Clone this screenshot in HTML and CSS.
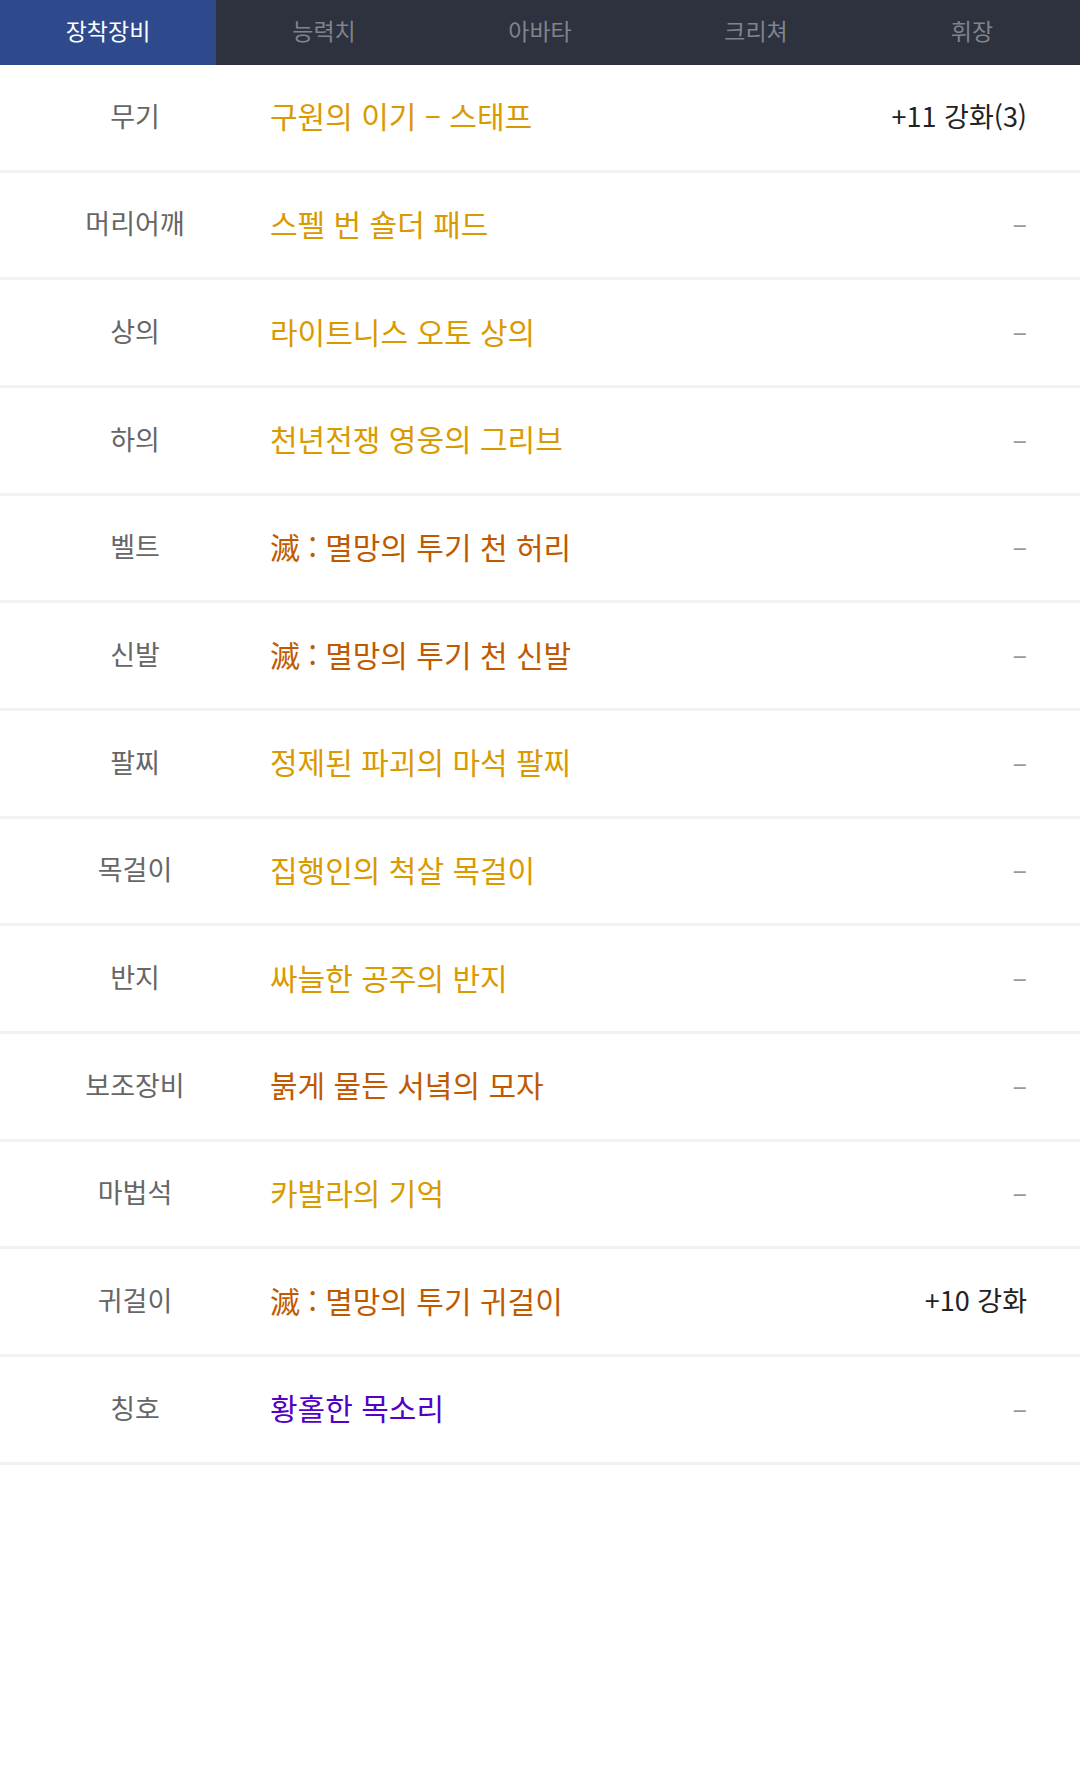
FILE: index.html
```html
<!DOCTYPE html>
<html lang="ko">
<head>
  <meta charset="UTF-8" />
  <meta name="viewport" content="width=device-width, initial-scale=1.0" />
  <title>장착장비</title>
  <link rel="stylesheet" href="styles.css">
</head>
<body>

  <nav class="tabs">
    <div class="tab active">장착장비</div>
    <div class="tab">능력치</div>
    <div class="tab">아바타</div>
    <div class="tab">크리쳐</div>
    <div class="tab">휘장</div>
  </nav>

  <div class="equip-list">
    <div class="row">
      <div class="slot">무기</div>
      <div class="name rare">구원의 이기 – 스태프</div>
      <div class="value">+11 강화(3)</div>
    </div>
    <div class="row">
      <div class="slot">머리어깨</div>
      <div class="name rare">스펠 번 숄더 패드</div>
      <div class="value empty">–</div>
    </div>
    <div class="row">
      <div class="slot">상의</div>
      <div class="name rare">라이트니스 오토 상의</div>
      <div class="value empty">–</div>
    </div>
    <div class="row">
      <div class="slot">하의</div>
      <div class="name rare">천년전쟁 영웅의 그리브</div>
      <div class="value empty">–</div>
    </div>
    <div class="row">
      <div class="slot">벨트</div>
      <div class="name epic">滅 : 멸망의 투기 천 허리</div>
      <div class="value empty">–</div>
    </div>
    <div class="row">
      <div class="slot">신발</div>
      <div class="name epic">滅 : 멸망의 투기 천 신발</div>
      <div class="value empty">–</div>
    </div>
    <div class="row">
      <div class="slot">팔찌</div>
      <div class="name rare">정제된 파괴의 마석 팔찌</div>
      <div class="value empty">–</div>
    </div>
    <div class="row">
      <div class="slot">목걸이</div>
      <div class="name rare">집행인의 척살 목걸이</div>
      <div class="value empty">–</div>
    </div>
    <div class="row">
      <div class="slot">반지</div>
      <div class="name rare">싸늘한 공주의 반지</div>
      <div class="value empty">–</div>
    </div>
    <div class="row">
      <div class="slot">보조장비</div>
      <div class="name epic">붉게 물든 서녘의 모자</div>
      <div class="value empty">–</div>
    </div>
    <div class="row">
      <div class="slot">마법석</div>
      <div class="name rare">카발라의 기억</div>
      <div class="value empty">–</div>
    </div>
    <div class="row">
      <div class="slot">귀걸이</div>
      <div class="name epic">滅 : 멸망의 투기 귀걸이</div>
      <div class="value">+10 강화</div>
    </div>
    <div class="row">
      <div class="slot">칭호</div>
      <div class="name unique">황홀한 목소리</div>
      <div class="value empty">–</div>
    </div>
  </div>

</body>
</html>
```

FILE: styles.css
```css
* { box-sizing: border-box; }

body {
  font-family: 'Noto Sans CJK KR', 'Noto Sans', sans-serif;
  background-color: #fff;
  color: #222;
  margin: 0;
}

.tabs {
  display: flex;
  height: 65px;
  background-color: #2d323e;
}

.tab {
  flex: 1;
  display: flex;
  align-items: center;
  justify-content: center;
  padding-bottom: 6px;
  font-size: 23px;
  color: #80848b;
}

.tab.active {
  background-color: #2e4a8c;
  color: #fff;
}

.row {
  display: flex;
  align-items: center;
  height: 107.67px;
  border-bottom: 3px solid #f2f2f2;
  padding-right: 53px;
  padding-bottom: 4px;
}

.slot {
  width: 270px;
  flex-shrink: 0;
  text-align: center;
  font-size: 27px;
  color: #666;
}

.name {
  flex: 1;
  font-size: 30px;
}

.rare { color: #d99a00; }
.epic { color: #c05a00; }
.unique { color: #5300c9; }

.value {
  font-size: 27px;
  color: #222;
}

.value.empty { color: #999; }
```
